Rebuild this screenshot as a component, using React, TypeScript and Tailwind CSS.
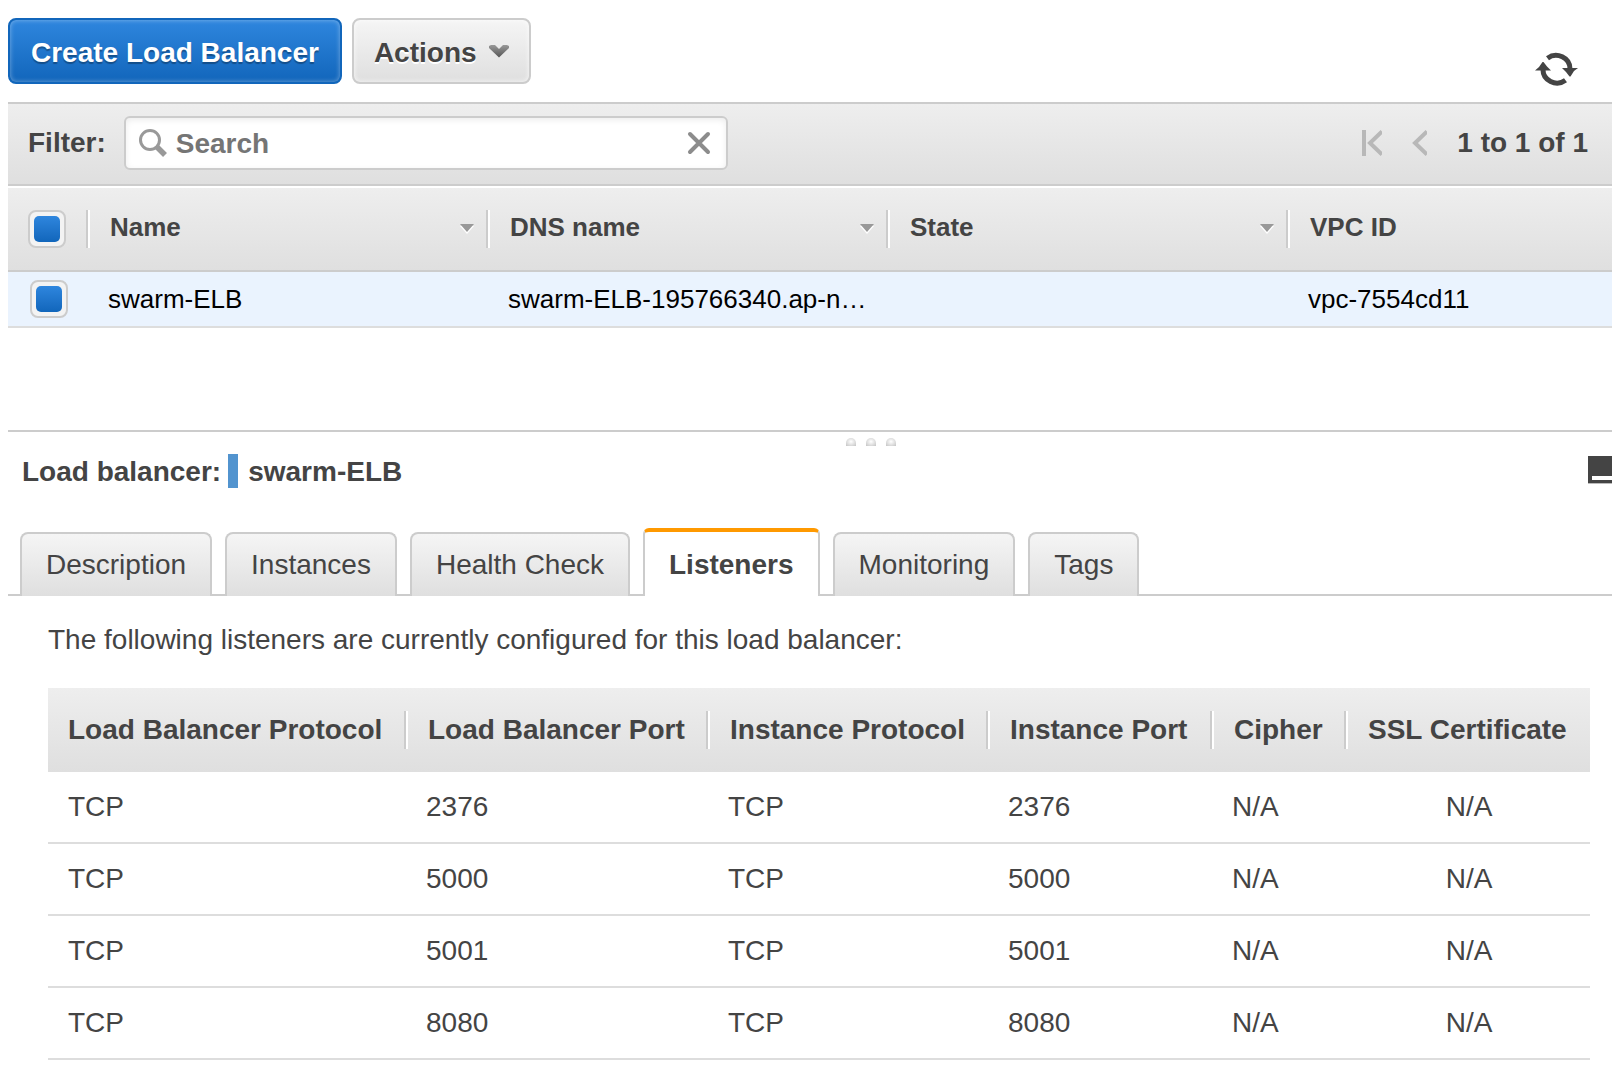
import { useState } from "react";

interface Listener {
  lbProtocol: string;
  lbPort: number;
  instanceProtocol: string;
  instancePort: number;
  cipher: string;
  certificate: string;
}

const listeners: Listener[] = [
  { lbProtocol: "TCP", lbPort: 2376, instanceProtocol: "TCP", instancePort: 2376, cipher: "N/A", certificate: "N/A" },
  { lbProtocol: "TCP", lbPort: 5000, instanceProtocol: "TCP", instancePort: 5000, cipher: "N/A", certificate: "N/A" },
  { lbProtocol: "TCP", lbPort: 5001, instanceProtocol: "TCP", instancePort: 5001, cipher: "N/A", certificate: "N/A" },
  { lbProtocol: "TCP", lbPort: 8080, instanceProtocol: "TCP", instancePort: 8080, cipher: "N/A", certificate: "N/A" },
];

const tabs = ["Description", "Instances", "Health Check", "Listeners", "Monitoring", "Tags"];

function Divider() {
  return <span className="h-[38px] w-1 shrink-0 border-l-2 border-[#ccc] bg-white" />;
}

function Checkbox({ label }: { label: string }) {
  return (
    <input
      type="checkbox"
      defaultChecked
      aria-label={label}
      className="grid size-[38px] appearance-none place-items-center rounded-lg border-2 border-[#ccc] bg-[#f3f3f3] before:size-[26px] before:rounded-[5px] checked:before:bg-linear-to-b checked:before:from-[#2e86de] checked:before:to-[#1166bb]"
    />
  );
}

function SortArrow() {
  return (
    <svg width="16" height="12" viewBox="0 0 16 12" className="shrink-0">
      <path d="M1 3h14l-7 8z" fill="#fff" />
      <path d="M1 1h14l-7 8z" fill="#999" />
    </svg>
  );
}

function RefreshIcon() {
  return (
    <svg width="43" height="36" viewBox="0 0 43 36" fill="none">
      <path d="M12.500 7.200A14 13.500 0 0 1 35 18" stroke="#444" strokeWidth="5" />
      <path d="M30.500 29.200A14 13.500 0 0 1 8 18" stroke="#444" strokeWidth="5" />
      <path d="M27 17h16l-4 3-3.500 5.500h-1L31 21z" fill="#444" />
      <path d="M0 19.500h16l-4-4-3.500-4.500h-1L4 16z" fill="#444" />
    </svg>
  );
}

function Toolbar() {
  return (
    <div className="flex items-start justify-between pt-[18px] pr-[34px] pb-[15px]">
      <div className="flex gap-[10px]">
        <button className="h-[66px] rounded-lg border-2 border-[#1166bb] bg-linear-to-b from-[#2e86de] to-[#1166bb] px-[21px] pt-[3px] font-bold text-white shadow-[inset_0_0_5px_rgba(255,255,255,0.4)] text-shadow-[0_2px_1px_rgba(0,0,0,0.3)]">
          Create Load Balancer
        </button>
        <button className="flex h-[66px] items-center gap-3 rounded-lg border-2 border-[#ccc] bg-linear-to-b from-[#f5f5f5] to-[#dfdfdf] px-5 pt-[3px] font-bold shadow-[inset_0_0_5px_rgba(255,255,255,0.8)] text-shadow-[0_2px_0_#fff]">
          Actions
          <svg width="20" height="16" viewBox="0 0 20 16">
            <defs>
              <linearGradient id="caret" x1="0" y1="0" x2="0" y2="1">
                <stop offset="0" stopColor="#999" />
                <stop offset="1" stopColor="#555" />
              </linearGradient>
            </defs>
            <path d="M0 1L2 0h4l4 4 4-4h4l2 1v2L10 12.500 0 3z" fill="url(#caret)" />
          </svg>
        </button>
      </div>
      <button aria-label="Refresh" className="pt-[33px]">
        <RefreshIcon />
      </button>
    </div>
  );
}

function FilterBar() {
  return (
    <div className="flex h-[84px] items-center justify-between border-y-2 border-[#ccc] bg-linear-to-b from-[#eee] to-[#dfdfdf] pr-6 pb-[2px] pl-5 font-bold">
      <div className="flex items-center gap-[18px]">
        <label htmlFor="filter">Filter:</label>
        <div className="flex h-[54px] w-[604px] items-center rounded-md border-2 border-[#ccc] bg-white pr-[15px] pl-3 shadow-[inset_0_2px_6px_rgba(0,0,0,0.08)]">
          <svg width="30" height="30" viewBox="0 0 30 30" fill="none" stroke="#999">
            <circle cx="12" cy="12" r="9.500" strokeWidth="3" />
            <path d="M19 19l8 8" strokeWidth="5.500" />
          </svg>
          <input
            id="filter"
            type="text"
            placeholder="Search"
            className="ml-1 min-w-0 flex-1 bg-transparent pt-[2px] pl-1 outline-none placeholder:text-[#757575]"
          />
          <button aria-label="Clear filter">
            <svg width="24" height="24" viewBox="0 0 24 24" stroke="#8c8c8c" strokeWidth="4" strokeLinecap="round">
              <path d="M3 3l18 18M21 3L3 21" />
            </svg>
          </button>
        </div>
      </div>
      <div className="flex items-center">
        <button aria-label="First page" className="mr-[30px]">
          <svg width="20" height="26" viewBox="0 0 20 26" fill="none" stroke="#b8b8b8" strokeWidth="4">
            <path d="M2 0v26M20 1.500L8 13l12 11.500" />
          </svg>
        </button>
        <button aria-label="Previous page" className="mr-[30px]">
          <svg width="15" height="26" viewBox="0 0 15 26" fill="none" stroke="#b8b8b8" strokeWidth="4">
            <path d="M15 1.500L3 13l12 11.500" />
          </svg>
        </button>
        <span>1 to 1 of 1</span>
      </div>
    </div>
  );
}

function BalancerTable() {
  return (
    <table className="mt-[2px] w-full table-fixed border-separate border-spacing-0 text-left text-[26px] leading-8">
      <colgroup>
        <col className="w-[82px]" />
        <col className="w-[400px]" />
        <col className="w-[400px]" />
        <col className="w-[400px]" />
        <col />
      </colgroup>
      <thead>
        <tr className="h-[84px] bg-linear-to-b from-[#eee] to-[#dfdfdf] [&>th]:border-b-2 [&>th]:border-[#ccc]">
          <th className="p-0">
            <div className="flex items-center justify-between pl-5">
              <Checkbox label="Select all load balancers" />
              <Divider />
            </div>
          </th>
          {["Name", "DNS name", "State"].map((name) => (
            <th key={name} className="p-0">
              <div className="flex items-center pl-5">
                <span className="flex-1 pb-1">{name}</span>
                <SortArrow />
                <span className="w-[11px]" />
                <Divider />
              </div>
            </th>
          ))}
          <th className="p-0">
            <div className="pb-1 pl-5">VPC ID</div>
          </th>
        </tr>
      </thead>
      <tbody className="text-black">
        <tr className="h-14 bg-[#eaf3fe] [&>td]:border-b-2 [&>td]:border-[#ddd]">
          <td className="p-0 pl-[22px]">
            <Checkbox label="Select swarm-ELB" />
          </td>
          <td className="p-0 pl-[18px]">swarm-ELB</td>
          <td className="p-0 pl-[18px] whitespace-nowrap">swarm-ELB-195766340.ap-n…</td>
          <td className="p-0" />
          <td className="p-0 pl-[18px]">vpc-7554cd11</td>
        </tr>
      </tbody>
    </table>
  );
}

function ListenersTable() {
  return (
    <table className="w-full table-fixed border-separate border-spacing-0 text-left leading-8">
      <colgroup>
        <col className="w-[360px]" />
        <col className="w-[302px]" />
        <col className="w-[280px]" />
        <col className="w-[224px]" />
        <col className="w-[134px]" />
        <col />
      </colgroup>
      <thead>
        <tr className="h-[84px] bg-linear-to-b from-[#eee] to-[#dfdfdf]">
          {["Load Balancer Protocol", "Load Balancer Port", "Instance Protocol", "Instance Port", "Cipher"].map((name) => (
            <th key={name} className="p-0">
              <div className="flex items-center justify-between pl-5 whitespace-nowrap">
                {name}
                <Divider />
              </div>
            </th>
          ))}
          <th className="p-0 pl-5 whitespace-nowrap">SSL Certificate</th>
        </tr>
      </thead>
      <tbody>
        {listeners.map((item) => (
          <tr key={item.lbPort} className="h-[72px] [&>td]:border-b-2 [&>td]:border-[#ddd]">
            <td className="p-0 pl-5">{item.lbProtocol}</td>
            <td className="p-0 pl-[18px]">{item.lbPort}</td>
            <td className="p-0 pl-[18px]">{item.instanceProtocol}</td>
            <td className="p-0 pl-[18px]">{item.instancePort}</td>
            <td className="p-0 pl-[18px]">{item.cipher}</td>
            <td className="p-0 text-center">{item.certificate}</td>
          </tr>
        ))}
      </tbody>
    </table>
  );
}

export default function App() {
  const [active, setActive] = useState("Listeners");

  return (
    <div className="bg-white pl-2 font-['Liberation_Sans',Arial,sans-serif] text-[28px] leading-8 text-[#444]">
      <Toolbar />
      <FilterBar />
      <BalancerTable />

      <div className="mt-[102px] flex justify-center gap-[10px] border-t-2 border-[#ccc] pt-[6px] pl-[122px]">
        <span className="h-2 w-[10px] rounded-t-full bg-radial-[at_50%_45%] from-white to-[#c4c4c4]" />
        <span className="h-2 w-[10px] rounded-t-full bg-radial-[at_50%_45%] from-white to-[#c4c4c4]" />
        <span className="h-2 w-[10px] rounded-t-full bg-radial-[at_50%_45%] from-white to-[#c4c4c4]" />
      </div>

      <div className="flex items-start justify-between pt-2">
        <h2 className="flex items-end pl-[14px] font-bold">
          Load balancer:
          <span className="mr-[10px] ml-[7px] h-[34px] w-[10px] bg-[#5294cf]" />
          swarm-ELB
        </h2>
        <button aria-label="Minimize panel" className="pt-[2px]">
          <svg width="24" height="28" viewBox="0 0 24 28">
            <path d="M0 0h24v27H0z" fill="#444" />
            <path d="M0 27h24v1H0z" fill="#bbb" />
            <path d="M4 20h20v4H4z" fill="#fff" />
          </svg>
        </button>
      </div>

      <div role="tablist" className="mt-10 flex items-end gap-[13px] border-b-2 border-[#ccc] pl-3">
        {tabs.map((tab) => (
          <button
            key={tab}
            role="tab"
            aria-selected={tab === active}
            onClick={() => setActive(tab)}
            className={
              tab === active
                ? "-mb-[2px] h-[68px] rounded-t-md border-x-2 border-t-4 border-x-[#ccc] border-t-[#ff9900] bg-white px-6 pt-[2px] font-bold"
                : "-mb-[2px] h-16 rounded-t-lg border-x-2 border-t-2 border-[#ccc] bg-linear-to-b from-[#f5f5f5] to-[#dfdfdf] px-6"
            }
          >
            {tab}
          </button>
        ))}
      </div>

      <div className="pt-7 pr-[22px] pb-7 pl-10">
        <p className="mb-8">The following listeners are currently configured for this load balancer:</p>
        <ListenersTable />
      </div>
    </div>
  );
}
